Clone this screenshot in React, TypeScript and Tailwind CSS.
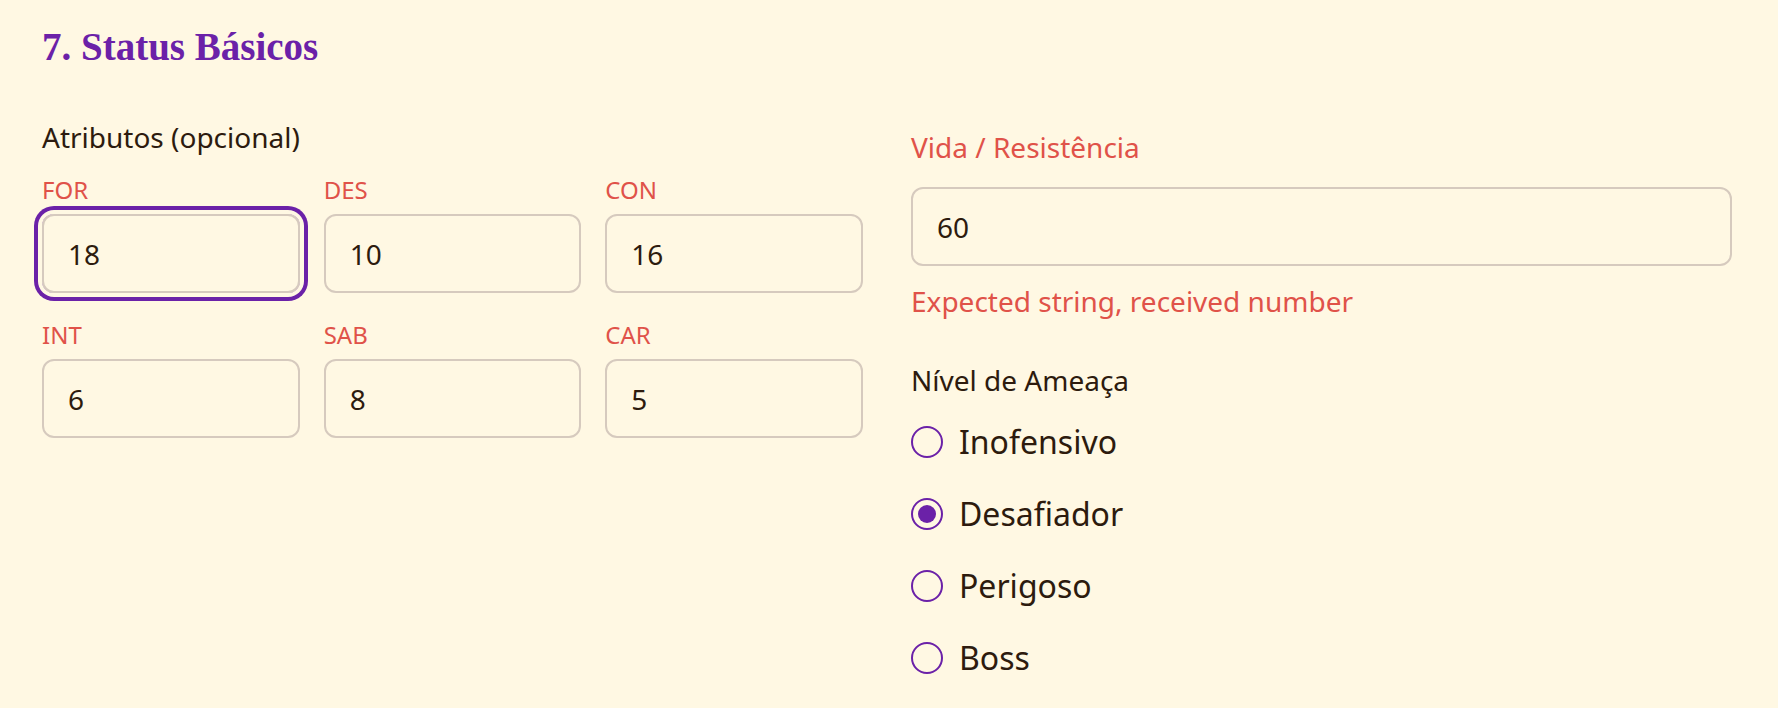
import React from "react";

const attrs = [
  { k: "FOR", v: "18", focus: true },
  { k: "DES", v: "10" },
  { k: "CON", v: "16" },
  { k: "INT", v: "6" },
  { k: "SAB", v: "8" },
  { k: "CAR", v: "5" },
];

const levels = [
  { label: "Inofensivo", checked: false },
  { label: "Desafiador", checked: true },
  { label: "Perigoso", checked: false },
  { label: "Boss", checked: false },
];

export default function App() {
  return (
    <div className="min-h-screen bg-[#fff8e3] pl-[42px] pt-[19px] font-['Noto_Sans','Open_Sans',sans-serif] text-[#2d1b0e]">
      <h2 className="font-['Liberation_Serif',serif] text-[39px] font-bold leading-[56px] text-[#6b21a8]">
        7. Status Básicos
      </h2>
      <div className="mt-[42px] grid grid-cols-[821px_821px] gap-x-[48px]">
        {/* Left column */}
        <div>
          <div className="text-[28px] leading-[40px]">Atributos (opcional)</div>
          <div className="mt-[17px] grid grid-cols-3 gap-x-[24px] gap-y-[26px]">
            {attrs.map((a) => (
              <div key={a.k} className="flex flex-col">
                <label className="text-[24px] leading-[32px] text-[#e05249]">{a.k}</label>
                <div
                  className={
                    a.focus
                      ? "mt-[8px] flex h-[79px] items-center rounded-[12px] border-2 border-[#d6cabe] px-[24px] text-[28px] ring-4 ring-[#6b21a8] ring-offset-4 ring-offset-[#fff8e3]"
                      : "mt-[8px] flex h-[79px] items-center rounded-[12px] border-2 border-[#d6cabe] px-[24px] text-[28px]"
                  }
                >
                  {a.v}
                </div>
              </div>
            ))}
          </div>
        </div>

        {/* Right column */}
        <div className="pt-[10px]">
          <div className="text-[28px] leading-[40px] text-[#e05249]">Vida / Resistência</div>
          <div className="mt-[20px] flex h-[79px] items-center rounded-[12px] border-2 border-[#d6cabe] px-[24px] text-[28px]">
            60
          </div>
          <div className="mt-[15px] text-[28px] leading-[40px] text-[#e05249]">
            Expected string, received number
          </div>
          <div className="mt-[39px] text-[28px] leading-[40px]">Nível de Ameaça</div>
          <div className="mt-[18px] flex flex-col gap-[24px]">
            {levels.map((l) => (
              <div key={l.label} className="flex h-[48px] items-center gap-[16px]">
                <span className="flex h-[32px] w-[32px] items-center justify-center rounded-full border-2 border-[#6b21a8]">
                  {l.checked && <span className="h-[18px] w-[18px] rounded-full bg-[#6b21a8]" />}
                </span>
                <span className="text-[32px] leading-[48px]">{l.label}</span>
              </div>
            ))}
          </div>
        </div>
      </div>
    </div>
  );
}
